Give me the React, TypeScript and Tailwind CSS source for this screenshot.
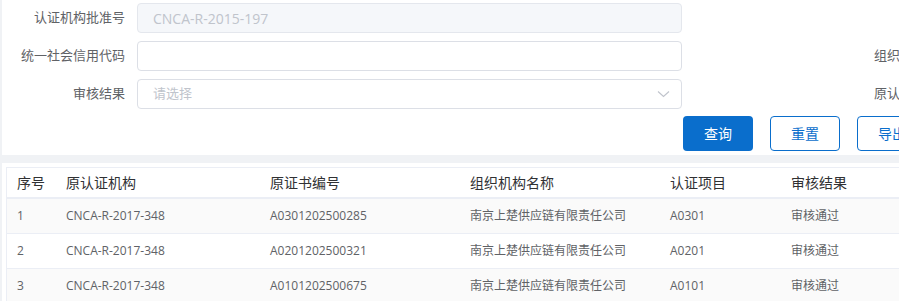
import React from "react";

const font = { fontFamily: '"Open Sans", "Noto Sans CJK SC", sans-serif' };

export default function App() {
  const rows = [
    ["1", "CNCA-R-2017-348", "A0301202500285", "南京上楚供应链有限责任公司", "A0301", "审核通过"],
    ["2", "CNCA-R-2017-348", "A0201202500321", "南京上楚供应链有限责任公司", "A0201", "审核通过"],
    ["3", "CNCA-R-2017-348", "A0101202500675", "南京上楚供应链有限责任公司", "A0101", "审核通过"],
  ];
  const headers = ["序号", "原认证机构", "原证书编号", "组织机构名称", "认证项目", "审核结果"];
  const widths = ["w-[49px]", "w-[204px]", "w-[200px]", "w-[200px]", "w-[121px]", "w-[200px]"];

  return (
    <div className="w-[899px] h-[301px] overflow-hidden bg-[#f0f2f5] pl-[2px]" style={font}>
      {/* Search form */}
      <div className="bg-white pt-[3px] pb-[4px] h-[155px] overflow-hidden">
        <div className="flex items-center h-[30px] whitespace-nowrap">
          <label className="w-[135px] shrink-0 pr-3 text-right text-[13px] text-[#606266]">认证机构批准号</label>
          <div className="w-[545px] shrink-0 h-[30px] rounded-[4px] border border-[#e4e7ed] bg-[#f5f7fa] px-[15px] flex items-center text-[14px] text-[#c0c4cc]">
            CNCA-R-2015-197
          </div>
        </div>
        <div className="flex items-center h-[30px] mt-[8px] whitespace-nowrap">
          <label className="w-[135px] shrink-0 pr-3 text-right text-[13px] text-[#606266]">统一社会信用代码</label>
          <div className="w-[545px] shrink-0 h-[30px] rounded-[4px] border border-[#dcdfe6] bg-white" />
          <span className="ml-[192px] shrink-0 text-[13px] text-[#606266]">组织机构名称</span>
        </div>
        <div className="flex items-center h-[30px] mt-[8px] whitespace-nowrap">
          <label className="w-[135px] shrink-0 pr-3 text-right text-[13px] text-[#606266]">审核结果</label>
          <div className="w-[545px] shrink-0 h-[30px] rounded-[4px] border border-[#dcdfe6] bg-white px-[15px] flex items-center justify-between text-[13px] text-[#c0c4cc]">
            <span>请选择</span>
            <svg width="13" height="8" viewBox="0 0 13 8" className="mr-[-4px]">
              <path d="M1 1.5 L6.5 6.5 L12 1.5" fill="none" stroke="#c0c4cc" strokeWidth="1.1" />
            </svg>
          </div>
          <span className="ml-[192px] shrink-0 text-[13px] text-[#606266]">原认证机构</span>
        </div>
        <div className="flex items-center gap-[17px] mt-[7px] pl-[681px] whitespace-nowrap">
          <button className="w-[70px] h-[35px] shrink-0 rounded-[4px] bg-[#0a6ecc] text-white text-[14px]">查询</button>
          <button className="w-[70px] h-[35px] shrink-0 rounded-[4px] border border-[#0a6ecc] bg-white text-[#0a6ecc] text-[14px]">重置</button>
          <button className="w-[70px] h-[35px] shrink-0 rounded-[4px] border border-[#0a6ecc] bg-white text-[#0a6ecc] text-[14px]">导出</button>
        </div>
      </div>

      {/* Result table */}
      <div className="mt-[8px] bg-white p-[4px] pr-0 h-[200px]">
        <div className="border border-[#ebeef5] border-r-0">
          <div className="flex h-[31px] items-center border-b-2 border-[#ebeef5] text-[14px] text-[#303133] whitespace-nowrap">
            {headers.map((h, i) => (
              <div key={h} className={`${widths[i]} shrink-0 pl-[10px]`}>
                {h}
              </div>
            ))}
          </div>
          {rows.map((r, ri) => (
            <div
              key={ri}
              className={`flex h-[35px] items-center border-b border-[#ebeef5] text-[12px] text-[#606266] whitespace-nowrap ${
                ri % 2 === 0 ? "bg-[#fafafa]" : "bg-white"
              }`}
            >
              {r.map((c, ci) => (
                <div key={ci} className={`${widths[ci]} shrink-0 pl-[10px]`}>
                  {c}
                </div>
              ))}
            </div>
          ))}
        </div>
      </div>
    </div>
  );
}
